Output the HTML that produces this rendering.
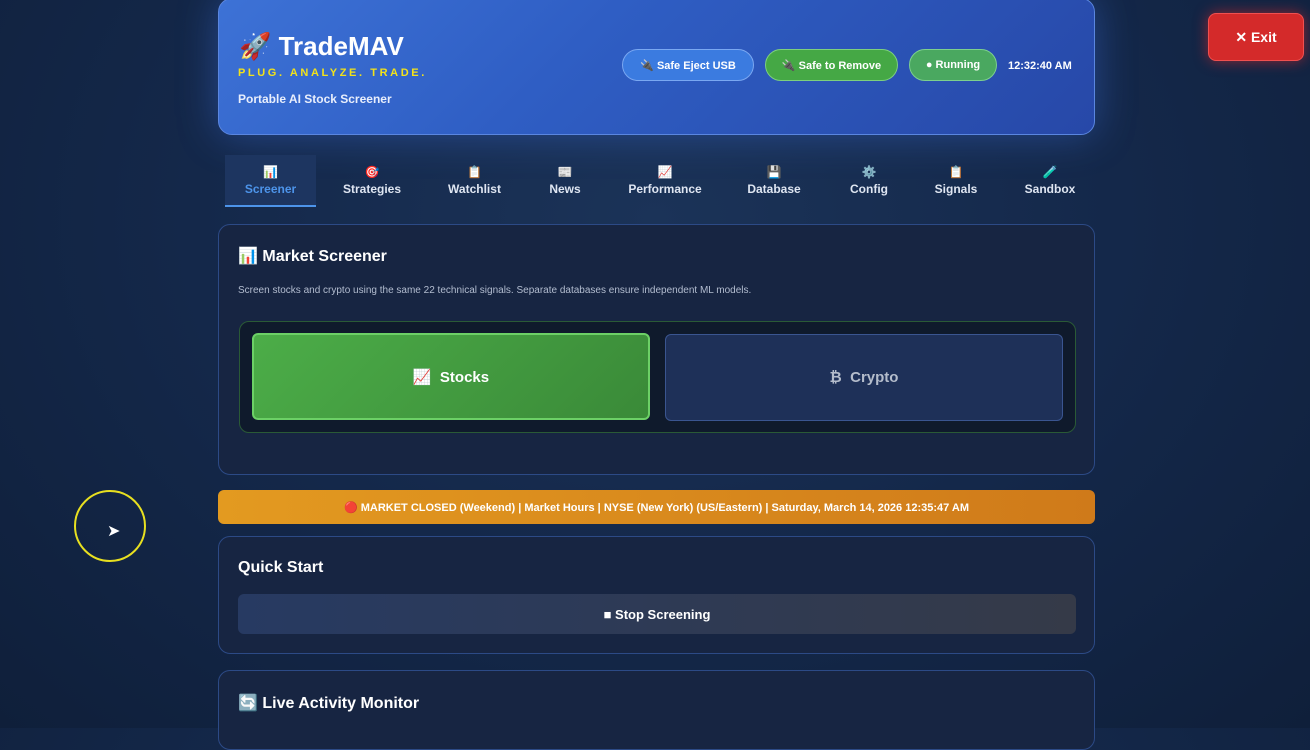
<!DOCTYPE html>
<html><head><meta charset="utf-8"><style>
*{box-sizing:border-box;margin:0;padding:0}
body{width:1310px;height:728px;overflow:hidden;background:radial-gradient(ellipse at 50% 30%,#1b3358 0%,#14284a 50%,#0f1f3a 100%);font-family:"Liberation Sans","Noto Sans CJK SC",sans-serif;color:#fff;position:relative}
.hdr{position:absolute;left:218px;top:-2px;width:877px;height:137px;border-radius:14px;background:linear-gradient(135deg,#3d72d6 0%,#2f5ec4 40%,#2748a8 100%);border:1px solid #5a86e0;box-shadow:0 0 40px rgba(60,110,220,.45)}
.title{position:absolute;left:20px;top:32px;font-size:26px;font-weight:bold}
.tag{position:absolute;left:19px;top:68px;font-size:11px;font-weight:bold;color:#f2e21a;letter-spacing:2.6px}
.sub{position:absolute;left:19px;top:92px;font-size:12px;font-weight:bold;color:#e8eefc}
.pill{position:absolute;top:50px;height:32px;border-radius:16px;font-size:11px;font-weight:bold;display:flex;align-items:center;justify-content:center}
.exit{position:absolute;left:1208px;top:13px;width:96px;height:48px;border-radius:8px;background:#d42a2a;border:1px solid #f05050;box-shadow:0 0 14px rgba(230,40,40,.6);font-weight:bold;font-size:14px;display:flex;align-items:center;justify-content:center}
.tabs{position:absolute;left:218px;top:155px;width:877px;height:52px}
.tab{position:absolute;top:0;height:52px;text-align:center;font-size:12px;font-weight:bold;color:#dfe6f2}
.tab i{display:block;font-style:normal;font-size:12px;height:14px;margin-top:10px;margin-bottom:3px}
.card{position:absolute;left:218px;width:877px;border-radius:12px;background:#172542;border:1px solid #2c4a86}
h2{position:absolute;left:19px;font-size:16px;font-weight:bold}
</style></head><body>
<div class="hdr">
<div class="title">🚀 TradeMAV</div>
<div class="tag">PLUG. ANALYZE. TRADE.</div>
<div class="sub" style="top:93px">Portable AI Stock Screener</div>
<div class="pill" style="left:403px;width:132px;background:#3b7be0;border:1px solid #7aa8f2">🔌 Safe Eject USB</div>
<div class="pill" style="left:546px;width:133px;background:#45a845;border:1px solid #7dd07d">🔌 Safe to Remove</div>
<div class="pill" style="left:690px;width:88px;background:#4aa860;border:1px solid #7dd08d">● Running</div>
<div style="position:absolute;left:789px;top:61px;font-size:11px;font-weight:bold">12:32:40 AM</div>
</div>
<div class="exit">✕ Exit</div>
<div class="tabs">
<div class="tab" style="left:7px;width:91px;background:#1d3560;color:#4d94ea;border-bottom:2px solid #4d94ea"><i>📊</i>Screener</div>
<div class="tab" style="left:114px;width:80px"><i>🎯</i>Strategies</div>
<div class="tab" style="left:219px;width:75px"><i>📋</i>Watchlist</div>
<div class="tab" style="left:322px;width:50px"><i>📰</i>News</div>
<div class="tab" style="left:404px;width:86px"><i>📈</i>Performance</div>
<div class="tab" style="left:524px;width:64px"><i>💾</i>Database</div>
<div class="tab" style="left:626px;width:50px"><i>⚙️</i>Config</div>
<div class="tab" style="left:712px;width:52px"><i>📋</i>Signals</div>
<div class="tab" style="left:802px;width:60px"><i>🧪</i>Sandbox</div>
</div>
<div class="card" style="top:224px;height:251px">
<h2 style="top:21px">📊 Market Screener</h2>
<div style="position:absolute;left:19px;top:60px;font-size:10px;color:#b3bdd0">Screen stocks and crypto using the same 22 technical signals. Separate databases ensure independent ML models.</div>
<div style="position:absolute;left:20px;top:96px;width:837px;height:112px;border-radius:10px;background:#0f1a2c;border:1px solid #2a5a36">
<div style="position:absolute;left:12px;top:11px;width:398px;height:87px;border-radius:6px;background:linear-gradient(135deg,#4cad48,#3a8a38);border:2px solid #6cd066;display:flex;align-items:center;justify-content:center;font-weight:bold;font-size:15px">📈&nbsp; Stocks</div>
<div style="position:absolute;left:425px;top:12px;width:398px;height:87px;border-radius:6px;background:#1e3058;border:1px solid #3a5590;display:flex;align-items:center;justify-content:center;font-weight:bold;font-size:15px;color:#b4bccb">₿&nbsp; Crypto</div>
</div>
</div>
<div style="position:absolute;left:218px;top:490px;width:877px;height:34px;border-radius:6px;background:linear-gradient(90deg,#e39a20,#cf7a1a);font-size:11px;font-weight:bold;display:flex;align-items:center;justify-content:center">🔴 MARKET CLOSED (Weekend) | Market Hours | NYSE (New York) (US/Eastern) | Saturday, March 14, 2026 12:35:47 AM</div>
<div class="card" style="top:536px;height:118px">
<h2 style="top:22px">Quick Start</h2>
<div style="position:absolute;left:19px;top:57px;width:838px;height:40px;border-radius:6px;background:linear-gradient(90deg,#273a62,#353a48);font-size:13px;font-weight:bold;display:flex;align-items:center;justify-content:center">■ Stop Screening</div>
</div>
<div class="card" style="top:670px;height:80px">
<h2 style="top:22px">🔄 Live Activity Monitor</h2>
</div>
<div style="position:absolute;left:74px;top:490px;width:72px;height:72px;border-radius:50%;border:2px solid #e8e020"></div>
<div style="position:absolute;left:107px;top:521px;font-size:16px;color:#fff">➤</div>
</body></html>
